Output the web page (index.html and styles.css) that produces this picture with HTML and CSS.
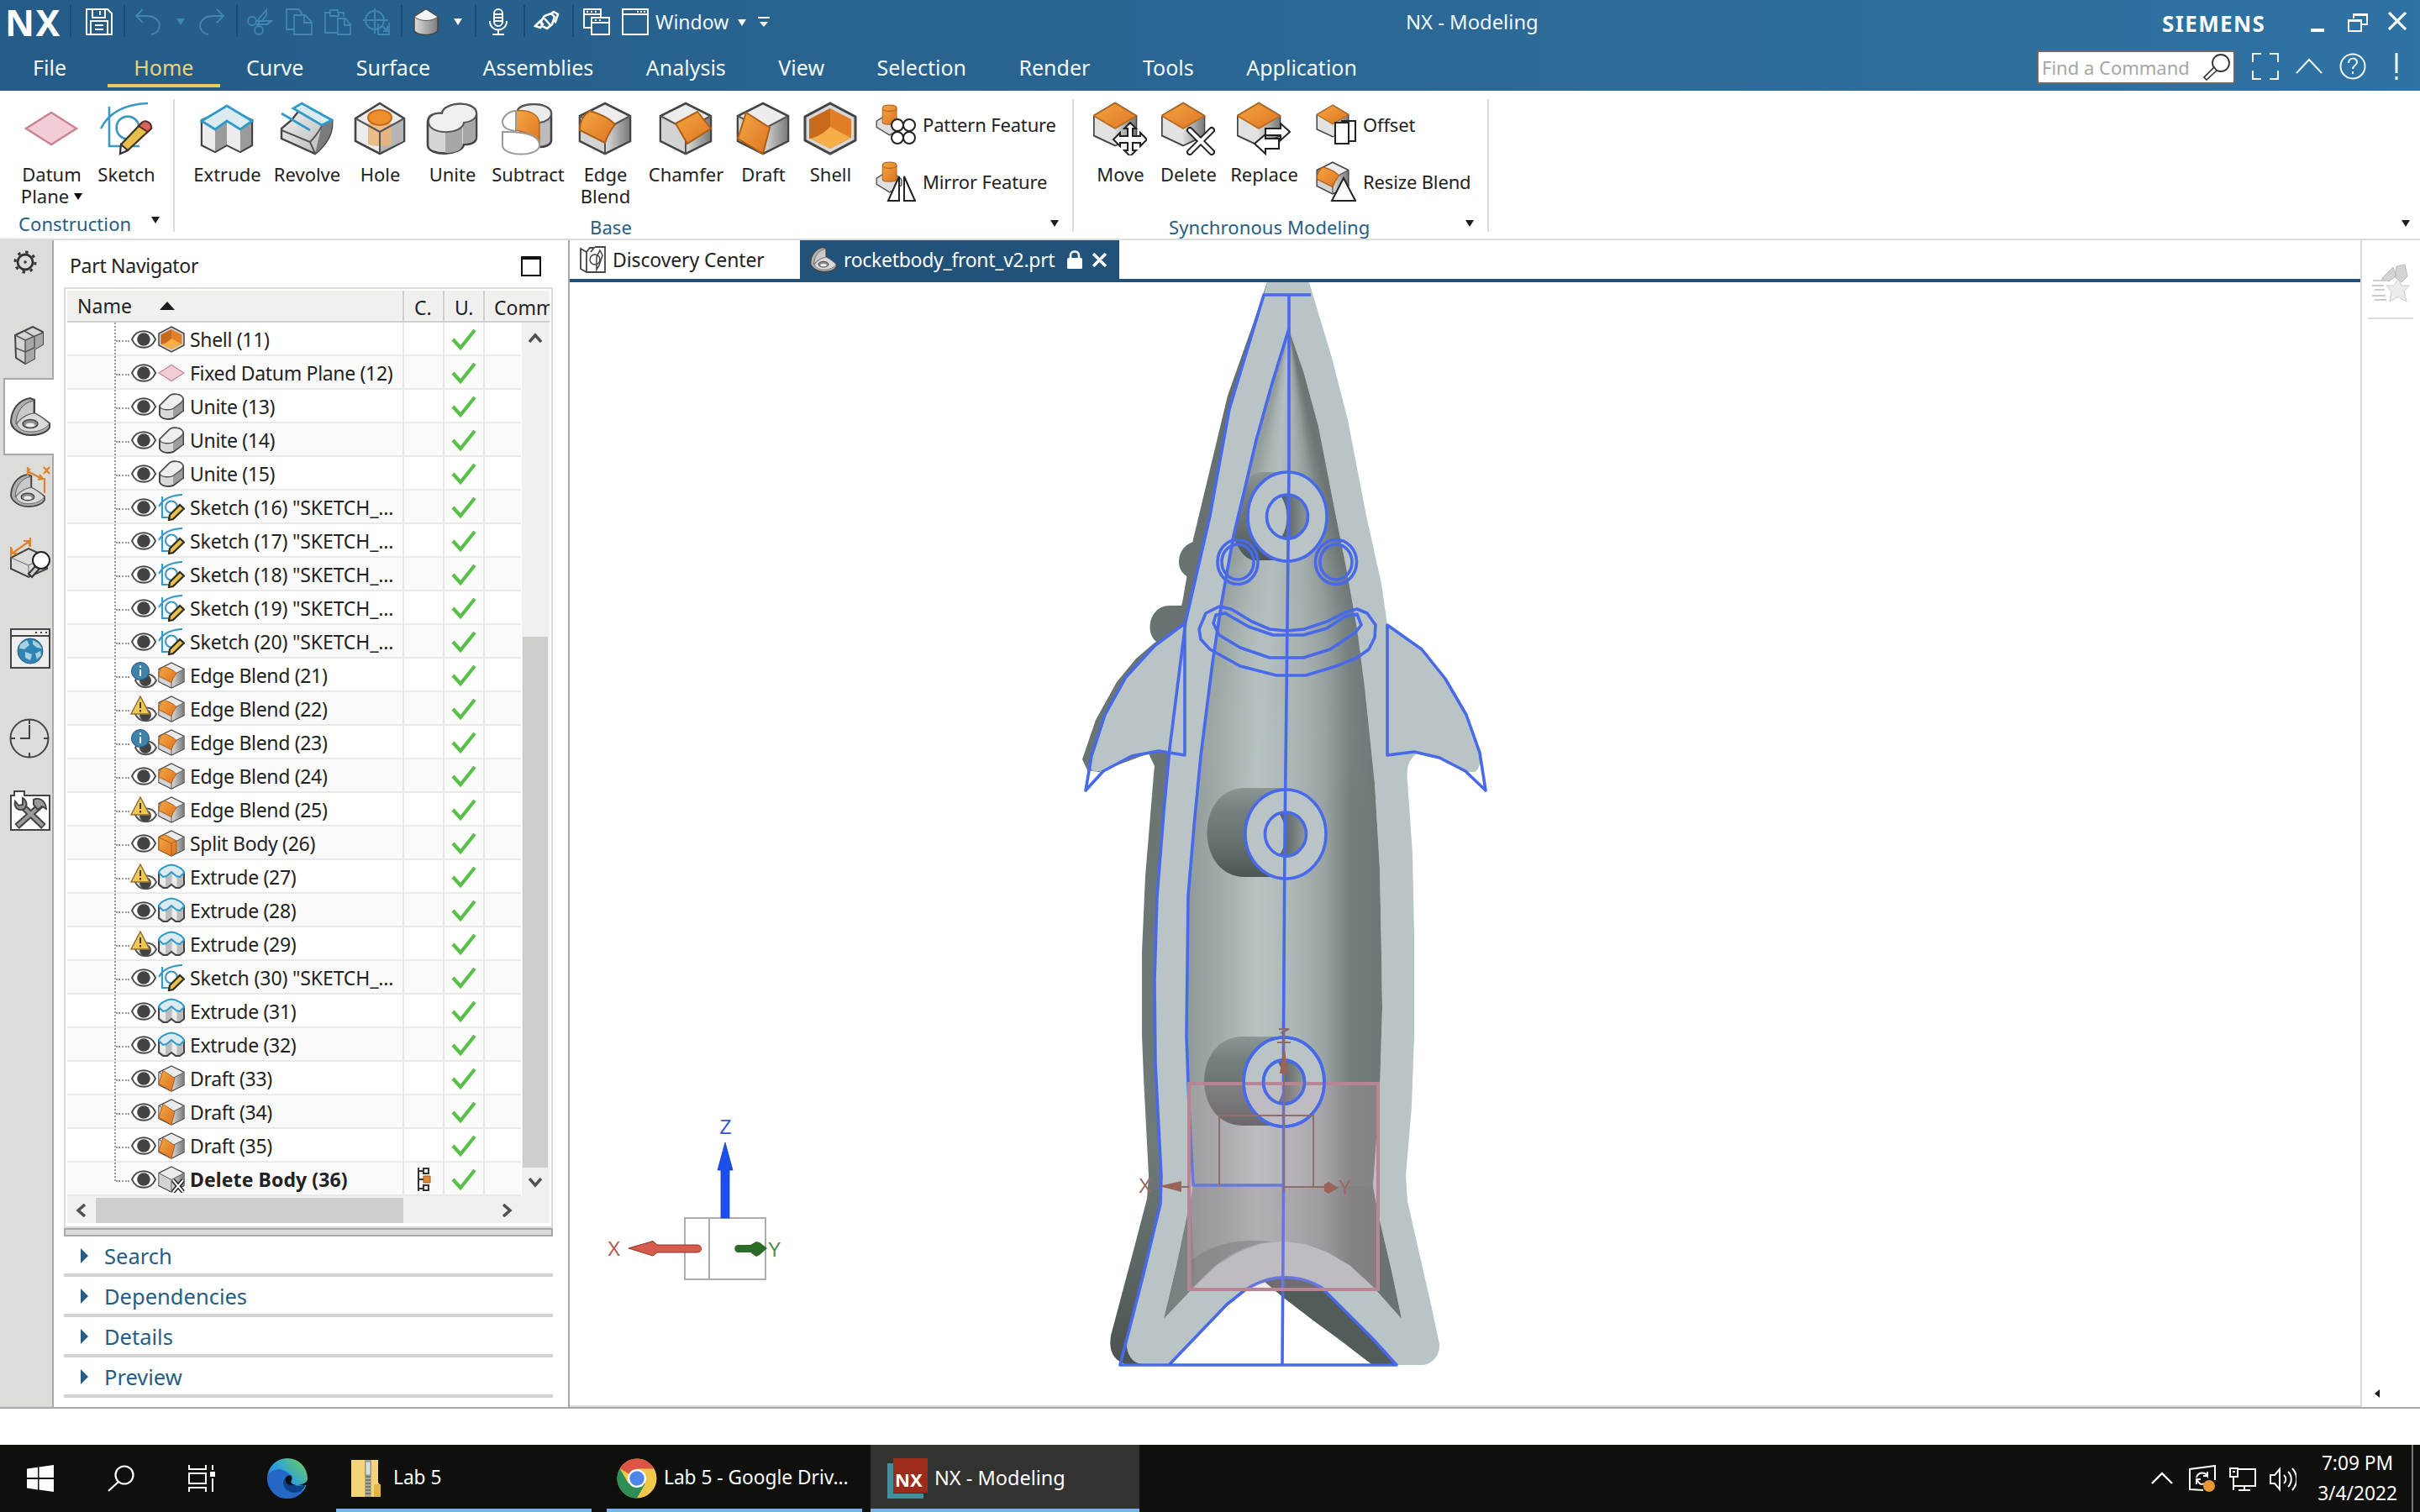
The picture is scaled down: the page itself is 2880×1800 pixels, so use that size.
FILE: index.html
```html
<!DOCTYPE html>
<html lang="en">
<head>
<meta charset="utf-8">
<title>NX - Modeling</title>
<link rel="stylesheet" href="styles.css">
</head>
<body>
<svg class="defs" aria-hidden="true">
<defs>
<linearGradient id="gGrey" x1="0" x2="1" y1="0" y2="1"><stop offset="0" stop-color="#f4f4f4"/><stop offset="1" stop-color="#b4b4b4"/></linearGradient>
<linearGradient id="gDark" x1="0" x2="1" y1="0" y2="0"><stop offset="0" stop-color="#dcdcdc"/><stop offset="1" stop-color="#7c7c7c"/></linearGradient>
<linearGradient id="gOr" x1="0" x2="1" y1="0" y2="1"><stop offset="0" stop-color="#f4a742"/><stop offset="1" stop-color="#dd7424"/></linearGradient>
<linearGradient id="gEdge" x1="0" x2="1" y1="1" y2="0"><stop offset="0" stop-color="#1c56b5"/><stop offset=".5" stop-color="#2c9fdc"/><stop offset="1" stop-color="#74d34e"/></linearGradient>
<symbol id="datum" viewBox="0 0 32 32"><path d="M16 6.500 31 16 16 25.500 1 16z" fill="#f3cdd6" stroke="#c98593" stroke-width="1.200"/></symbol>
<symbol id="sketch" viewBox="0 0 32 32"><g fill="none" stroke="#3a9ac4" stroke-width="1.300"><path d="M6 3v23.500h18M1 16C6 6 16 1.500 29 1"/><circle cx="17" cy="15.500" r="6.700"/></g><path d="M12.500 31 13 25.500 25.500 12.500 31 16 17 29z" fill="#e9bf4b" stroke="#3a3424" stroke-width="1.100"/><path d="M25.500 12.500c2-2 6 0 5.500 3.500l-2 2-5.500-3.500z" fill="#d8655c" stroke="#5a2a26"/><path d="M12.500 31 13 25.500l4 3.500z" fill="#fff" stroke="#333"/></symbol>
<symbol id="sketchS" viewBox="0 0 32 32"><g fill="none" stroke="#3a9ac4" stroke-width="2.200"><path d="M5 3v25h10M1 15C6 6 16 1.500 29 1"/><circle cx="16" cy="15.500" r="7"/></g><path d="M13 31 14 25 26 13l5 4.500L18 30z" fill="#e9bf4b" stroke="#2e2a22" stroke-width="2.200"/></symbol>
<symbol id="extrude" viewBox="0 0 32 32"><path d="M1 11v15l8 4 7-4 8 4 7-4V11L16 4z" fill="#c9c9c9" stroke="#444" stroke-width="1.200"/><path d="M1.500 12v13.500l7.500 4V16zM16 11v14.500l8 4V16z" fill="#ececec"/><path d="M9 16v13.500l7-4V11zM24 16v13.500l6.500-4V12z" fill="#9b9b9b"/><path d="M16 2.500 31 11.500 24 16.500 16 11.500 9 16.500 1 11.500z" fill="#dceaf1" stroke="#2f9bc8" stroke-width="1.400"/></symbol>
<symbol id="extrudeS" viewBox="0 0 32 32"><path d="M1 11v14l5 4h5l5-4 5 4h5l5-4V11L16 4z" fill="#bdbdbd" stroke="#444" stroke-width="2"/><path d="M2.500 13v11l6.500 4V15zM16.500 13v11l6 4V15z" fill="#ececec"/><path d="M16 1.500C22 2 31 7 31 11l-5 5-4-1-6-5-6 5-4 1-5-5c0-4 9-9 15-9.500z" fill="#dceaf1" stroke="#2f9bc8" stroke-width="2"/></symbol>
<symbol id="revolve" viewBox="0 0 32 32"><path d="M14 2 31 11c1 8-4 15-10 20L1 22v-6l6-5z" fill="url(#gGrey)" stroke="#444" stroke-width="1.200"/><path d="M25 14c5-2 6-3 6-3 1 8-4 15-10 20z" fill="#7b7b7b"/><path d="M1 17l17 7 3 7M18 24c4-4 7-9 7-10" fill="none" stroke="#555"/><path d="M13 1 31 11l-6 3L8 4zM8 4l17 10M1 7l17 10" fill="#dceaf1" stroke="#2f9bc8" stroke-width="1.400"/></symbol>
<symbol id="cube" viewBox="0 0 32 32"><path d="M16 1 31 8.500V23.500L16 31 1 23.500V8.500z" fill="#ececec" stroke="#444" stroke-width="1.300"/><path d="M16 16.500 30.500 9v14L16 30.300z" fill="url(#gDark)"/><path d="M1.500 9 16 16.500V30.300L1.500 23z" fill="#d3d3d3"/><path d="M1 8.500 16 16.500 31 8.500M16 16.500V31" fill="none" stroke="#555"/></symbol>
<symbol id="hole" viewBox="0 0 32 32"><path d="M16 1 30.500 10V23.500L16 31 1.500 23.500V10z" fill="#ececec" stroke="#444" stroke-width="1.300"/><path d="M16 18 30 10.500v13L16 30.300z" fill="#b5b5b5"/><path d="M9 13h14v12c0 2-14 2-14 0z" fill="#eab478" opacity=".85"/><ellipse cx="16" cy="9.500" rx="7" ry="4.500" fill="#ee8e2c" stroke="#c66a17"/><path d="M1.500 10 16 18l14.500-8M16 18v12" fill="none" stroke="#555"/></symbol>
<symbol id="unite" viewBox="0 0 32 32"><path d="M1.500 12C1.500 8 6 6.500 10 7c1-7 20-8 20.500 0v14c0 4-5 4.500-7.500 4.500C22 32 2 33 1.500 26z" fill="#d6d6d6" stroke="#444" stroke-width="1.300"/><path d="M12 17V30.500c6 0 10-1 10.500-6V13c5 0 7.500-2 7.500-5v13c0 3-4 4-8 4V13z" fill="#a7a7a7"/><path d="M2 12C2 8 6 6.500 10 7c1-7 20-8 20.500 0 0 4-4 5-7.500 5.500C22 20 2 20 2 12z" fill="#f0f0f0" stroke="#555"/></symbol>
<symbol id="uniteS" viewBox="0 0 32 32"><path d="M2 15 14 3c4-3 15-2 16 4v14L18 30c-6 2-14 1-16-4z" fill="#d9d9d9" stroke="#444" stroke-width="2"/><path d="M18 18c7-3 8-5 11.500-10v13L18 29z" fill="#9d9d9d"/><path d="M2 15 14 3c4-3 15-2 16 4 0 4-5 6-10 10-4 4-17 4-18-2z" fill="#efefef" stroke="#555" stroke-width="1.500"/></symbol>
<symbol id="subtract" viewBox="0 0 32 32"><path d="M10 6C10 0 30 0 30 7V23c0 3-4 4-7 4L14 17z" fill="#bcbcbc" stroke="#444" stroke-width="1.300"/><path d="M10 6C10 0 30 0 30 7c0 3-3 5-7 5.500" fill="#ececec" stroke="#555"/><path d="M9 5.500c8-1 14 2 14 8v13C23 22 19 20 13 18L9 17z" fill="url(#gOr)" stroke="#ad5f15" stroke-width=".6"/><path d="M9 5.500v12C4 17 1 15 1 12s4-6.500 8-6.500z" fill="#fff" stroke="#999"/><path d="M1 18c3 0 22-1 22 8 0 7-22 7-22 0z" fill="#fff" stroke="#999"/></symbol>
<symbol id="eblend" viewBox="0 0 32 32"><use href="#cube"/><path d="M7 5.500c7 2 12 5 15 8-3 4-5 8-6 11L1 17C1 12 3 8 7 5.500z" fill="url(#gOr)" stroke="#ad5f15"/></symbol>
<symbol id="chamfer" viewBox="0 0 32 32"><use href="#cube"/><path d="M23 6 31 16 17 25 10 13z" fill="url(#gOr)" stroke="#ad5f15"/></symbol>
<symbol id="draft" viewBox="0 0 32 32"><use href="#cube"/><path d="M6 6.500 20 15.500 16 31 1 22z" fill="url(#gOr)" stroke="#ad5f15"/></symbol>
<symbol id="split" viewBox="0 0 32 32"><use href="#cube"/><path d="M1 9 8 5.500 22 13v14L16 31 1 23.500z" fill="url(#gOr)" stroke="#ad5f15"/><path d="M1 9l15 7 6-3M16 16v14" fill="none" stroke="#ad5f15"/></symbol>
<symbol id="shell" viewBox="0 0 32 32"><path d="M16 1 31 9V23L16 31 1 23V9z" fill="#d8d8d8" stroke="#444" stroke-width="1.500"/><path d="M16 4 28.500 10.500V21.500L16 28 3.500 21.500V10.500z" fill="#e07f28"/><path d="M3.500 10.500 16 4v11c-2 4-8 7-12.500 7z" fill="#c86a1c"/><path d="M4 22c5-1 9-4 12-7l12 6.500L16 28z" fill="#f6ae48"/></symbol>
<symbol id="topcube" viewBox="0 0 32 32"><path d="M16 1 31 10V24L16 31 1 24V10z" fill="#e2e2e2" stroke="#444" stroke-width="1.200"/><path d="M16 19 30.500 10.500v13L16 30.500z" fill="url(#gDark)"/><path d="M16 1 31 10 16 19 1 10z" fill="url(#gOr)" stroke="#b86a1b"/></symbol>
<symbol id="boss" viewBox="0 0 32 32"><path d="M1 17 14 9l12 9v6L14 31 1 23z" fill="#dedede" stroke="#555" stroke-width="1.200"/><path d="M7 4c0-4 14-4 14 0v14c0 3-14 3-14 0z" fill="url(#gOr)" stroke="#b86a1b"/><path d="M7 4c0 4 14 4 14 0" fill="none" stroke="#b86a1b"/></symbol>
<symbol id="delbody" viewBox="0 0 32 32"><use href="#cube"/><path d="M18 17 30 31M30 17 18 31" stroke="#222" stroke-width="5"/><path d="M18 17 30 31M30 17 18 31" stroke="#fff" stroke-width="2"/></symbol>
<symbol id="eye" viewBox="0 0 32 32"><path d="M2 16C7 3 25 3 30 16 25 29 7 29 2 16z" fill="#fff" stroke="#484848" stroke-width="2"/><circle cx="16" cy="16" r="7.800" fill="#434343"/></symbol>
<symbol id="info" viewBox="0 0 32 32"><path d="M6 22C11 12 27 12 31 22 26 33 11 33 6 22z" fill="#fff" stroke="#555" stroke-width="2"/><circle cx="18" cy="22" r="7" fill="#434343"/><circle cx="12" cy="11" r="10.500" fill="#3f83aa" stroke="#1d5578"/><path d="M12 9v8M12 4.500v2.500" stroke="#fff" stroke-width="2"/></symbol>
<symbol id="warn" viewBox="0 0 32 32"><path d="M6 22C11 12 27 12 31 22 26 33 11 33 6 22z" fill="#fff" stroke="#555" stroke-width="2"/><circle cx="18" cy="23" r="7" fill="#434343"/><path d="M12 1 23 22H1z" fill="#edc758" stroke="#8f752f" stroke-width="1.500"/><path d="M12 8v7M12 17v2.500" stroke="#443718" stroke-width="2"/></symbol>
<symbol id="check" viewBox="0 0 32 28"><path d="M3 14 12 24 29 3" fill="none" stroke="#58c048" stroke-width="4.200"/></symbol>
<symbol id="part" viewBox="0 0 48 46"><path d="M1 30C1 15 10 3 24 1l5 2v16c8 4 13 8 18 12v5C45 40 38 45 24 45 12 45 2 37 1 30z" fill="#adadad" stroke="#444" stroke-width="2"/><path d="M7 32C7 18 15 6 28 4v15c-9 1-17 7-21 13z" fill="#c9c9c9" stroke="#555"/><path d="M8 32c5-7 12-12 21-13 8 4 13 8 17.500 12.500C43 37 35 41 25 41S11 38 8 32z" fill="#dadada" stroke="#666"/><ellipse cx="24" cy="31.500" rx="9" ry="5" fill="#8b8b8b" stroke="#444" stroke-width="1.500"/><ellipse cx="24" cy="33" rx="5.500" ry="2.500" fill="#eee"/></symbol>
<symbol id="caret" viewBox="0 0 10 8"><path d="M0 0h10L5 8z"/></symbol>
</defs>
</svg>

<header class="top">
  <div class="quick">
    <span class="logo">NX</span><i class="vs"></i>
    <span class="q w62 sv"><svg viewBox="0 0 32 32" class="ln"><path d="M1 1h25l5 5v25H1zM8 1v10h15V1M17 3v5M6 31V15h20v16M11 20h10M11 25h10"/></svg></span><i class="vs"></i>
    <span class="q w54"><svg viewBox="0 0 32 32" class="dim"><path d="M10 1 2 9l8 8M2 9h12c20 0 20 20 6 22"/></svg></span>
    <span class="q w24"><svg class="car dimf" viewBox="0 0 10 8"><use href="#caret"/></svg></span>
    <span class="q w50"><svg viewBox="0 0 32 32" class="dim"><path d="m22 1 8 8-8 8M30 9H18C-2 9-2 29 12 31"/></svg></span><i class="vs ml4"></i>
    <span class="q w46 ml4"><svg viewBox="0 0 32 32" class="dim"><circle cx="6" cy="15" r="5"/><circle cx="14" cy="26" r="5"/><path d="M11 15h18l-5 4H11M14 21 14 12l9-10v6l-6 8"/></svg></span>
    <span class="q w46"><svg viewBox="0 0 32 32" class="dim"><path d="M10 25H1V1h14l4 4v3M10 31V8h13l8 8v15zM22 8v9h9"/></svg></span>
    <span class="q w46"><svg viewBox="0 0 32 32" class="dim"><path d="M15 29H1V5h6V2h9v3h7v5M7 5v4h10V5M16 31V12h9l6 7v12zM24 12v8h7"/></svg></span>
    <span class="q w46"><svg viewBox="0 0 32 32" class="dim"><circle cx="14" cy="14" r="11"/><path d="M14 0v30M0 14h30M18 31V18M18 31h13V17M22 20l7 7M29 21v6h-5"/></svg></span><i class="vs ml6"></i>
    <span class="q w56"><svg viewBox="0 0 32 32"><path d="M2 10 16 1l14 9v17c-7 6-21 6-28 0z" fill="url(#gDark)" stroke="#444" stroke-width="1.500"/><path d="M2 10 16 1l14 9c-7 6-21 6-28 0z" fill="#f5f5f5" stroke="#555"/></svg></span>
    <span class="q w20"><svg class="car wf" viewBox="0 0 10 8"><use href="#caret"/></svg></span><i class="vs ml10"></i>
    <span class="q w52"><svg viewBox="0 0 32 32" class="ln"><rect x="11" y="1" width="10" height="20" rx="5"/><path d="M6 15c0 14 20 14 20 0M16 26v5M9 31h14M12 7h8M12 11h8M12 15h8"/></svg></span><i class="vs ml4"></i>
    <span class="q w52"><svg viewBox="0 0 32 32" class="ln"><path d="M2 21l6-6 3 4-3 4zM9 15l4-6 8-3 4 4-3 9-6 5-6-3zM21 6l3-2 5 3-3 9-3-2M13 12l7 8" stroke-width="2.600"/></svg></span><i class="vs ml4"></i>
    <span class="q w46 ml4"><svg viewBox="0 0 32 32" class="ln"><path d="M10 23H1V1h20v9M1 7h20M10 31V11h21v20zM10 17h21M4 4h2M9 4h2M14 4h2M14 14h2M19 14h2"/></svg></span>
    <span class="q w46"><svg viewBox="0 0 32 32" class="ln"><path d="M1 1h30v30H1zM1 7h30M18 4h2M22 4h2M26 4h2"/></svg></span>
    <span class="wtxt">Window</span>
    <svg class="car wf" viewBox="0 0 10 8"><use href="#caret"/></svg>
    <svg class="over" viewBox="0 0 14 14"><path d="M0 0h14v2H0zM2 6h10l-5 6z" fill="#fff"/></svg>
    <span class="title">NX - Modeling</span>
    <span class="siemens">SIEMENS</span>
    <svg class="min" viewBox="0 0 16 4"><path d="M0 0h16v4H0z" fill="#fff"/></svg>
    <svg class="rest" viewBox="0 0 24 24"><path d="M7 7V2h16v12h-6M1 9h15v13H1zM7 3h16M1 10h15" fill="none" stroke="#fff" stroke-width="2"/></svg>
    <svg class="cls" viewBox="0 0 22 22"><path d="M1 1l20 20M21 1 1 21" stroke="#fff" stroke-width="3.200"/></svg>
  </div>
  <nav class="menu">
    <a class="file">File</a><a class="on">Home</a><a>Curve</a><a>Surface</a><a>Assemblies</a><a>Analysis</a><a>View</a><a>Selection</a><a>Render</a><a>Tools</a><a>Application</a>
    <span class="find"><span>Find a Command</span><svg viewBox="0 0 32 32"><circle cx="21" cy="11" r="10" fill="#fff" stroke="#333" stroke-width="1.800"/><path d="M13 16 1 28l3 3 12-11z" fill="#fff" stroke="#333" stroke-width="1.600"/></svg></span>
    <svg class="mi" viewBox="0 0 32 32"><path d="M1 11V1h10M21 1h10v10M31 21v10H21M11 31H1V21"/></svg>
    <svg class="mi" viewBox="0 0 32 32"><path d="M1 24 16 8l15 16"/></svg>
    <svg class="mi" viewBox="0 0 32 32"><circle cx="16" cy="16" r="14.500"/><path d="M11 12c0-7 10-7 10-1 0 4-5 4-5 8M16 22v3"/></svg>
    <svg class="mi ex" viewBox="0 0 32 32"><path d="M16 0v24M16 28v4" stroke-width="3"/></svg>
  </nav>
</header>

<section class="ribbon">
  <div class="grp g1">
    <div class="tools">
      <div class="tool w88"><svg><use href="#datum"/></svg><span>Datum<br>Plane<svg class="mc" viewBox="0 0 10 8"><use href="#caret"/></svg></span></div>
      <div class="tool w90"><svg><use href="#sketch"/></svg><span>Sketch</span></div>
    </div>
    <div class="foot"><span>Construction</span><svg viewBox="0 0 10 8"><use href="#caret"/></svg></div>
  </div>
  <div class="grp g2">
    <div class="tools">
      <div class="tool w96"><svg><use href="#extrude"/></svg><span>Extrude</span></div>
      <div class="tool w94"><svg><use href="#revolve"/></svg><span>Revolve</span></div>
      <div class="tool w80"><svg><use href="#hole"/></svg><span>Hole</span></div>
      <div class="tool w92"><svg><use href="#unite"/></svg><span>Unite</span></div>
      <div class="tool w88"><svg><use href="#subtract"/></svg><span>Subtract</span></div>
      <div class="tool w96"><svg><use href="#eblend"/></svg><span>Edge<br>Blend</span></div>
      <div class="tool w96"><svg><use href="#chamfer"/></svg><span>Chamfer</span></div>
      <div class="tool w88"><svg><use href="#draft"/></svg><span>Draft</span></div>
      <div class="tool w72"><svg><use href="#shell"/></svg><span>Shell</span></div>
      <div class="smalls">
        <div><svg viewBox="0 0 48 48"><use href="#boss" width="38" height="38"/><g fill="#fff" stroke="#222" stroke-width="2"><circle cx="26" cy="25" r="7"/><circle cx="40" cy="25" r="7"/><circle cx="26" cy="40" r="7"/><circle cx="40" cy="40" r="7"/></g></svg>Pattern Feature</div>
        <div><svg viewBox="0 0 48 48"><use href="#boss" width="38" height="38"/><path d="M28 18v29H15zM34 18v29h13z" fill="#fff" stroke="#222" stroke-width="2"/></svg>Mirror Feature</div>
      </div>
    </div>
    <div class="foot"><span>Base</span><svg viewBox="0 0 10 8"><use href="#caret"/></svg></div>
  </div>
  <div class="grp g3">
    <div class="tools">
      <div class="tool w86"><svg viewBox="0 0 64 64"><use href="#topcube" width="54" height="54" x="-1"/><path d="M44 25l7 7h-4v9h9v-4l8 8-8 8v-4h-9v9h4l-7 7-7-7h4v-9h-9v4l-8-8 8-8v4h9v-9h-4z" fill="#fff" stroke="#222" stroke-width="2"/></svg><span>Move</span></div>
      <div class="tool w76"><svg viewBox="0 0 64 64"><use href="#topcube" width="54" height="54" x="-1"/><path d="M34 34 60 60M60 34 34 60" stroke="#222" stroke-width="8" stroke-linecap="round"/><path d="M34 34 60 60M60 34 34 60" stroke="#fff" stroke-width="4" stroke-linecap="round"/></svg><span>Delete</span></div>
      <div class="tool w104"><svg viewBox="0 0 64 64"><use href="#topcube" width="54" height="54" x="-1"/><path d="M34 32h18v-6l11 10-11 10v-6H34zM50 44H34v-5L21 50l13 12v-6h16z" fill="#fff" stroke="#222" stroke-width="2"/></svg><span>Replace</span></div>
      <div class="smalls s2">
        <div><svg viewBox="0 0 48 48"><use href="#topcube" width="40" height="40"/><path d="M30 20h17v24h-8M23 22h16v25H23z" fill="#fff" stroke="#222" stroke-width="2"/></svg>Offset</div>
        <div><svg viewBox="0 0 48 48"><use href="#eblend" width="40" height="40"/><path d="M33 20 47 47H19z" fill="#fff" stroke="#222" stroke-width="2"/></svg>Resize Blend</div>
      </div>
    </div>
    <div class="foot"><span>Synchronous Modeling</span><svg viewBox="0 0 10 8"><use href="#caret"/></svg></div>
  </div>
  <svg class="rbc" viewBox="0 0 10 8"><use href="#caret"/></svg>
</section>

<main class="main">
  <aside class="rail">
    <svg class="r1" viewBox="0 0 28 28"><circle cx="14" cy="14" r="9" fill="none" stroke="#333" stroke-width="2.800"/><circle cx="14" cy="14" r="12" fill="none" stroke="#333" stroke-width="3" stroke-dasharray="3.400 6"/><circle cx="14" cy="14" r="1.700" fill="#333"/></svg>
    <svg class="r2" viewBox="0 0 36 46"><path d="M1 11 22 1l12 6v15l-10 6v11l-11 6L2 38z" fill="#d5d5d5" stroke="#444" stroke-width="2"/><path d="M13 17 34 8v14l-10 6v11l-11 6z" fill="#a8a8a8"/><path d="M1 11l12 6 21-9M13 17v28M1 26l12 5 11-5V13L12 6M13 31v14" fill="none" stroke="#555" stroke-width="1.500"/></svg>
    <div class="cur"><svg viewBox="0 0 48 46"><use href="#part"/></svg></div>
    <svg class="r4" viewBox="0 0 48 50"><use href="#part" width="42" height="40" y="9"/><path d="M21 1v10M21 6l17 9M41 14v18M40 1l7 8M47 1l-7 8M24 3l-3 3 5 3M35 10l4 5-6 1" fill="none" stroke="#dd832d" stroke-width="2.200"/></svg>
    <svg class="r5" viewBox="0 0 48 50"><path d="M1 25 22 14l22 10v14L22 48 1 38z" fill="#dcdcdc" stroke="#444" stroke-width="2"/><path d="M1 25 22 34 42 24M22 34v13" fill="none" stroke="#666"/><path d="M1 24V12M24 12V1M2 20 22 6M2 14v6h7M16 5h7v6" fill="none" stroke="#dd832d" stroke-width="2.200"/><path d="M31 34 22 44l4 4 9-10z" fill="#ccc" stroke="#333" stroke-width="2"/><circle cx="37" cy="28" r="10" fill="#fff" stroke="#222" stroke-width="2"/></svg>
    <svg class="r6" viewBox="0 0 48 48"><path d="M1 1h46v46H1z" fill="#eee" stroke="#444" stroke-width="2"/><path d="M1 9h46M30 5h2M36 5h2M42 5h2" stroke="#444" stroke-width="2"/><circle cx="24" cy="27" r="15" fill="#2e84b2" stroke="#245f80"/><path d="M12 19l8-5 3 6-6 5-6-1zM27 14l7 4 4 6-6-1-5-4zM18 28l8 3-2 7-6-3zM30 30l6-3 1 5-5 5z" fill="#a9d1e4"/></svg>
    <svg class="r7" viewBox="0 0 48 48"><circle cx="24" cy="24" r="22.500" fill="none" stroke="#444" stroke-width="2"/><path d="M24 2v5M24 41v5M2 24h5M41 24h5M24 8v16H13" fill="none" stroke="#444" stroke-width="2"/></svg>
    <svg class="r8" viewBox="0 0 48 48"><path d="M1 6h4V1h12v5h30v41H1z" fill="#fff" stroke="#444" stroke-width="2"/><path d="M8 43 37 17M40 43 14 18" stroke="#444" stroke-width="8"/><path d="M9 42 37 17M39 42 14 18" stroke="#999" stroke-width="4"/><path d="M6 13c-2 8 5 12 11 9 4-4 3-10-2-13v8l-5 1zM28 11c6-3 14 0 15 11l-5-3-5 4-5-6z" fill="#999" stroke="#444" stroke-width="2"/></svg>
  </aside>

  <section class="panel">
    <div class="ph"><span>Part Navigator</span><i></i></div>
    <div class="tree">
      <div class="th"><span class="n">Name<svg viewBox="0 0 18 10"><path d="M0 10 9 0l9 10z" fill="#1c1c1c"/></svg></span><span class="c">C.</span><span class="c">U.</span><span class="m">Comm</span></div>
      <div class="tb">
        <div class="rows">
<div class="row"><i class="tw"></i><svg class="e"><use href="#eye"/></svg><svg class="f"><use href="#shell"/></svg><b>Shell (11)</b><u></u><u><svg><use href="#check"/></svg></u></div>
<div class="row"><i class="tw"></i><svg class="e"><use href="#eye"/></svg><svg class="f"><use href="#datum"/></svg><b>Fixed Datum Plane (12)</b><u></u><u><svg><use href="#check"/></svg></u></div>
<div class="row"><i class="tw"></i><svg class="e"><use href="#eye"/></svg><svg class="f"><use href="#uniteS"/></svg><b>Unite (13)</b><u></u><u><svg><use href="#check"/></svg></u></div>
<div class="row"><i class="tw"></i><svg class="e"><use href="#eye"/></svg><svg class="f"><use href="#uniteS"/></svg><b>Unite (14)</b><u></u><u><svg><use href="#check"/></svg></u></div>
<div class="row"><i class="tw"></i><svg class="e"><use href="#eye"/></svg><svg class="f"><use href="#uniteS"/></svg><b>Unite (15)</b><u></u><u><svg><use href="#check"/></svg></u></div>
<div class="row sk"><i class="tw"></i><svg class="e"><use href="#eye"/></svg><svg class="f"><use href="#sketchS"/></svg><b>Sketch (16) "SKETCH_...</b><u></u><u><svg><use href="#check"/></svg></u></div>
<div class="row sk"><i class="tw"></i><svg class="e"><use href="#eye"/></svg><svg class="f"><use href="#sketchS"/></svg><b>Sketch (17) "SKETCH_...</b><u></u><u><svg><use href="#check"/></svg></u></div>
<div class="row sk"><i class="tw"></i><svg class="e"><use href="#eye"/></svg><svg class="f"><use href="#sketchS"/></svg><b>Sketch (18) "SKETCH_...</b><u></u><u><svg><use href="#check"/></svg></u></div>
<div class="row sk"><i class="tw"></i><svg class="e"><use href="#eye"/></svg><svg class="f"><use href="#sketchS"/></svg><b>Sketch (19) "SKETCH_...</b><u></u><u><svg><use href="#check"/></svg></u></div>
<div class="row sk"><i class="tw"></i><svg class="e"><use href="#eye"/></svg><svg class="f"><use href="#sketchS"/></svg><b>Sketch (20) "SKETCH_...</b><u></u><u><svg><use href="#check"/></svg></u></div>
<div class="row"><i class="tw"></i><svg class="e"><use href="#info"/></svg><svg class="f"><use href="#eblend"/></svg><b>Edge Blend (21)</b><u></u><u><svg><use href="#check"/></svg></u></div>
<div class="row"><i class="tw"></i><svg class="e"><use href="#warn"/></svg><svg class="f"><use href="#eblend"/></svg><b>Edge Blend (22)</b><u></u><u><svg><use href="#check"/></svg></u></div>
<div class="row"><i class="tw"></i><svg class="e"><use href="#info"/></svg><svg class="f"><use href="#eblend"/></svg><b>Edge Blend (23)</b><u></u><u><svg><use href="#check"/></svg></u></div>
<div class="row"><i class="tw"></i><svg class="e"><use href="#eye"/></svg><svg class="f"><use href="#eblend"/></svg><b>Edge Blend (24)</b><u></u><u><svg><use href="#check"/></svg></u></div>
<div class="row"><i class="tw"></i><svg class="e"><use href="#warn"/></svg><svg class="f"><use href="#eblend"/></svg><b>Edge Blend (25)</b><u></u><u><svg><use href="#check"/></svg></u></div>
<div class="row"><i class="tw"></i><svg class="e"><use href="#eye"/></svg><svg class="f"><use href="#split"/></svg><b>Split Body (26)</b><u></u><u><svg><use href="#check"/></svg></u></div>
<div class="row"><i class="tw"></i><svg class="e"><use href="#warn"/></svg><svg class="f"><use href="#extrudeS"/></svg><b>Extrude (27)</b><u></u><u><svg><use href="#check"/></svg></u></div>
<div class="row"><i class="tw"></i><svg class="e"><use href="#eye"/></svg><svg class="f"><use href="#extrudeS"/></svg><b>Extrude (28)</b><u></u><u><svg><use href="#check"/></svg></u></div>
<div class="row"><i class="tw"></i><svg class="e"><use href="#warn"/></svg><svg class="f"><use href="#extrudeS"/></svg><b>Extrude (29)</b><u></u><u><svg><use href="#check"/></svg></u></div>
<div class="row sk"><i class="tw"></i><svg class="e"><use href="#eye"/></svg><svg class="f"><use href="#sketchS"/></svg><b>Sketch (30) "SKETCH_...</b><u></u><u><svg><use href="#check"/></svg></u></div>
<div class="row"><i class="tw"></i><svg class="e"><use href="#eye"/></svg><svg class="f"><use href="#extrudeS"/></svg><b>Extrude (31)</b><u></u><u><svg><use href="#check"/></svg></u></div>
<div class="row"><i class="tw"></i><svg class="e"><use href="#eye"/></svg><svg class="f"><use href="#extrudeS"/></svg><b>Extrude (32)</b><u></u><u><svg><use href="#check"/></svg></u></div>
<div class="row"><i class="tw"></i><svg class="e"><use href="#eye"/></svg><svg class="f"><use href="#draft"/></svg><b>Draft (33)</b><u></u><u><svg><use href="#check"/></svg></u></div>
<div class="row"><i class="tw"></i><svg class="e"><use href="#eye"/></svg><svg class="f"><use href="#draft"/></svg><b>Draft (34)</b><u></u><u><svg><use href="#check"/></svg></u></div>
<div class="row"><i class="tw"></i><svg class="e"><use href="#eye"/></svg><svg class="f"><use href="#draft"/></svg><b>Draft (35)</b><u></u><u><svg><use href="#check"/></svg></u></div>
<div class="row last"><i class="tw"></i><svg class="e"><use href="#eye"/></svg><svg class="f"><use href="#delbody"/></svg><b>Delete Body (36)</b><u><svg viewBox="0 0 28 28"><path d="M8 0v28M8 4h6M8 14h6M8 25h6M14 1h6v6h-6zM14 21h6v6h-6z" fill="none" stroke="#333" stroke-width="2"/><path d="M14 10h8v8h-8z" fill="#e08a34" stroke="#9a5c1c"/></svg></u><u><svg><use href="#check"/></svg></u></div>
        </div>
        <div class="vsb"><svg viewBox="0 0 16 12"><path d="M1 11 8 3l7 8" /></svg><i></i><svg viewBox="0 0 16 12"><path d="M1 1l7 8 7-8"/></svg></div>
      </div>
      <div class="hsb"><svg viewBox="0 0 12 16"><path d="M11 1 3 8l8 7"/></svg><i></i><svg viewBox="0 0 12 16"><path d="M1 1l8 7-8 7"/></svg></div>
    </div>
    <div class="split"></div>
    <div class="sec"><svg viewBox="0 0 9 18"><path d="M0 0l9 9-9 9z" fill="#255d86"/></svg>Search</div>
    <div class="sec"><svg viewBox="0 0 9 18"><path d="M0 0l9 9-9 9z" fill="#255d86"/></svg>Dependencies</div>
    <div class="sec"><svg viewBox="0 0 9 18"><path d="M0 0l9 9-9 9z" fill="#255d86"/></svg>Details</div>
    <div class="sec"><svg viewBox="0 0 9 18"><path d="M0 0l9 9-9 9z" fill="#255d86"/></svg>Preview</div>
  </section>

  <section class="work">
    <div class="tabs">
      <div class="tab"><svg viewBox="0 0 32 32" class="ti"><path d="M1 27V3l7 4v24zM8 31V7l4-5h5l-4 5M8 31h22V1H18" fill="none" stroke="#444" stroke-width="1.800"/><path d="M24 5l3 6-4 12-3 5V13z" fill="#fff" stroke="#444" stroke-width="1.500"/><circle cx="18" cy="16" r="6" fill="none" stroke="#444" stroke-width="1.500"/></svg><span>Discovery Center</span></div>
      <div class="tab act"><svg viewBox="0 0 48 46" class="ti"><use href="#part"/></svg><span>rocketbody_front_v2.prt</span><svg class="lock" viewBox="0 0 20 22"><path d="M5 10V6c0-6 10-6 10 0v4" fill="none" stroke="#fff" stroke-width="2.600"/><rect x="1" y="9" width="18" height="13" rx="1.500" fill="#fff"/></svg><svg class="x" viewBox="0 0 16 16"><path d="M1 1l14 14M15 1 1 15" stroke="#fff" stroke-width="3.400"/></svg></div>
    </div>
    <div class="vp">
<svg class="scene" viewBox="678 336 2131 1338">
<defs>
<linearGradient id="cav" gradientUnits="userSpaceOnUse" x1="1412" x2="1645" y1="0" y2="0"><stop offset="0" stop-color="#8f9b99"/><stop offset=".18" stop-color="#a0acab"/><stop offset=".36" stop-color="#b8c4c4"/><stop offset=".56" stop-color="#abb6b7"/><stop offset=".7" stop-color="#99a4a3"/><stop offset=".84" stop-color="#727d7b"/><stop offset="1" stop-color="#6e7877"/></linearGradient>
<linearGradient id="cyl" x1="0" x2="0" y1="0" y2="1"><stop offset="0" stop-color="#8b9695"/><stop offset=".25" stop-color="#75807f"/><stop offset=".6" stop-color="#687271"/><stop offset="1" stop-color="#4c5654"/></linearGradient>
<linearGradient id="side" gradientUnits="userSpaceOnUse" x1="0" x2="0" y1="336" y2="1625"><stop offset="0" stop-color="#646f6d"/><stop offset=".8" stop-color="#707b79"/><stop offset="1" stop-color="#4a5351"/></linearGradient>
<linearGradient id="hol" x1="0" x2="1" y1="0" y2="0"><stop offset="0" stop-color="#525c5a"/><stop offset=".5" stop-color="#6f7a78"/><stop offset="1" stop-color="#8d9896"/></linearGradient>
<clipPath id="cc"><path id="cavp" d="M1534 393 1514 456 1495 524 1480 588 1468 638 1454 716 1443 789 1429 900 1421 983 1414 1067 1413 1133 1412 1233 1415 1317 1420 1410 1415 1437 1400 1507 1385 1570 1420 1533 1447 1507 1473 1491 1500 1481 1527 1478 1553 1481 1580 1491 1607 1507 1635 1533 1668 1570 1657 1517 1642 1453 1634 1413 1642 1300 1645 1200 1644 1133 1642 1033 1636 932 1624 818 1615 749 1601 671 1588 606 1569 508 1551 442z"/></clipPath>
</defs>
<g fill="url(#side)">
<path d="M1428 644c-14 0-25 10-25 25 0 10 6 16 14 20z"/><path d="M1408 721h-16c-26 0-30 36-14 44l30-10z"/>
<path d="M1508 336 1490 389 1461 471 1420 642 1408 712 1401 746 1373 766 1352 784 1329 812 1304 857 1288 904l6 13 14 2 59-22 7 15-1 10-10 121-4 90v100l2 50 6 117-2 27-13 50-30 113c-3 20 4 30 20 35h80L1500 500 1530 336z"/>
</g>
<path fill="#b8c4c5" d="M1508 336 1504 351 1463 487 1440 614 1411 744 1374 769 1340 806 1315 851 1299 900 1297 914 1302 919 1313 917 1347 900 1367 896 1379 894 1391 896 1385 960 1377 1067 1374 1167 1375 1267 1377 1317 1382 1400 1381 1433 1360 1520 1341 1593C1339 1610 1346 1622 1358 1624H1392L1420 1597 1460 1553 1480 1537 1503 1525 1527 1521 1550 1523 1573 1533 1633 1593 1662 1625H1693C1706 1624 1714 1612 1713 1600L1703 1553 1687 1483 1675 1430 1673 1400 1680 1317 1683 1233V1113L1681 1017 1675 930C1673 910 1678 904 1686 897L1713 902 1744 919H1755C1762 915 1762 905 1761 896L1745 851 1720 808 1692 773 1651 744 1644 695 1626 614 1604 500 1585 426 1563 353 1558 336z"/>
<path fill="#525c5a" d="M1505 1526c20-8 42-6 68 7l89 91h-30l-39-30-33-24-30-23z"/>
<path fill="#fff" d="M1505 1528l25 19 30 23 33 27 39 27H1393l67-70 20-16z"/>
<g clip-path="url(#cc)">
<use href="#cavp" fill="url(#cav)"/>
<foreignObject x="1384" y="336" width="300" height="700"><div class="cone"></div></foreignObject>
<path d="M1380 1412h290v170h-290z" fill="#55605e" opacity=".16"/>
<path d="M1385 1570l15-63 15-100 6 90 0 40z" fill="#6c7776" opacity=".55"/>
<path d="M1418 1500c25-18 50-26 95-22-35 5-66 22-93 55z" fill="#5c6564" opacity=".45"/>
<path d="M1532 562h-32c-40 8-46 90-10 105h42z" fill="url(#cyl)"/>
<path d="M1530 938h-50c-58 2-58 104 0 106h50z" fill="url(#cyl)"/>
<path d="M1528 1234h-50c-60 2-60 104 0 106h50z" fill="url(#cyl)"/>
</g>
<g fill="#b8c4c5"><ellipse cx="1532" cy="615" rx="47" ry="53"/><ellipse cx="1530" cy="993" rx="48" ry="53"/><ellipse cx="1528" cy="1288" rx="48" ry="53"/></g>
<g fill="url(#hol)"><path d="M1524 590c42-14 42 66 0 51 10-14 10-36 0-51z"/><path d="M1522 968c42-14 42 66 0 51 10-14 10-36 0-51z"/><path d="M1520 1263c42-14 42 66 0 51 10-14 10-36 0-51z"/></g>
<g fill="none" stroke="#4769ea" stroke-width="3.600" stroke-linejoin="round">
<path d="M1560 351H1504L1463 487 1440 614 1411 740 1392 891 1385 967 1377 1067 1374 1167 1375 1267 1382 1400 1381 1433 1360 1520 1333 1625H1662L1633 1593 1573 1533C1545 1516 1510 1516 1480 1537L1460 1553 1392 1624"/>
<path d="M1534 351V560L1531 830 1529 1000 1527.500 1230V1411L1526 1624"/>
<path d="M1534 391 1514 456 1495 524 1480 588 1468 638 1454 716 1443 789 1429 900 1421 983 1414 1067 1412 1233 1415 1317 1420 1411H1527"/>
<path d="M1410 742V899L1379 894 1347 900 1313 918 1292 941 1299 900 1315 851 1340 806 1374 769z"/>
<path d="M1651 744 1692 773 1720 808 1745 851 1761 896 1768 941 1744 918 1713 902 1683 895 1651 899z"/>
<ellipse cx="1532" cy="615" rx="47" ry="53"/><ellipse cx="1532" cy="615" rx="24.500" ry="26"/>
<ellipse cx="1530" cy="993" rx="48" ry="53"/><ellipse cx="1530" cy="993" rx="24.500" ry="26"/>
<ellipse cx="1528" cy="1288" rx="48" ry="53"/><ellipse cx="1528" cy="1288" rx="24.500" ry="26"/>
<ellipse cx="1473" cy="669" rx="24" ry="26.500"/><ellipse cx="1473" cy="669" rx="19" ry="21"/><ellipse cx="1590" cy="669" rx="24.500" ry="26.500"/><ellipse cx="1590" cy="669" rx="19" ry="21"/>
<path d="M1427 749 1435 730 1451 722 1465 725 1490 740 1511 749 1531 751 1552 749 1579 740 1601 729 1615 725 1627 730 1637 744 1636 759 1629 773 1615 783 1590 793 1554 804H1519L1476 793 1440 773 1429 761z"/>
<path d="M1444 742 1447 732 1458 730 1486 746 1515 756H1551L1579 748 1601 734 1615 731 1620 744 1613 753 1583 773 1551 783H1511L1476 771 1451 756z"/>
</g>
<path d="M1415 1290h225v245h-225z" fill="#d3a3b6" fill-opacity=".24" stroke="#b98594" stroke-width="4"/>
<g fill="none" stroke="#4769ea" stroke-width="3.600"><ellipse cx="1528" cy="1288" rx="48" ry="53"/><ellipse cx="1528" cy="1288" rx="24.500" ry="26"/></g>
<g fill="none" stroke="#8e6c68" stroke-width="2"><path d="M1451 1412v-84h112v84M1527 1413h52M1385 1413h30M1528 1225v195M1520 1241h16M1522 1225h12l-10 5"/></g>
<g fill="#9a6358"><path d="M1380 1412l26-6v13zM1593 1414l-12-7-5 3v8l5 3zM1523 1278l5-35 5 35z"/></g>
<g class="ax" fill="#9a6a62"><text x="1355" y="1420">X</text><text x="1593" y="1422">Y</text></g>
<g fill="none" stroke="#adadad" stroke-width="2"><path d="M815 1450h96v73h-96zM844 1450v73"/></g>
<path d="M858 1450v-57h-4l9-33 9 33h-4v57z" fill="#1c4fee" stroke="#173fae" stroke-width=".8"/>
<path d="M748 1486l29-8.500 5 4.500h48a4 4 0 0 1 0 9h-48l-5 4z" fill="#d65b4c" stroke="#8c342a" stroke-width="1"/>
<path d="M878 1482h15l7-4 4 1 9 7-9 8-4 2-7-5h-15c-5 0-5-9 0-9z" fill="#2c6b28"/>
<g class="ax"><text x="856.500" y="1350" fill="#3a55c8">Z</text><text x="723" y="1495" fill="#b45a50">X</text><text x="914" y="1496" fill="#4d8a48">Y</text></g>
</svg>
    </div>
  </section>
  <aside class="rbar"><svg viewBox="0 0 46 46"><path d="M12 18 26 4l4 10-9 7zM30 3l10-2 3 14-7 7-8-6z" fill="#d4d4d4" stroke="#bbb"/><path d="M32 18l4 8h9l-6 7 3 12-10-6-10 6 2-12-6-7h9z" fill="#ececec" stroke="#ccc"/><path d="M2 20h18M1 26h14M4 31h12M1 38h16M4 43h14" stroke="#ccc" stroke-width="2"/></svg><i></i><svg class="bk" viewBox="0 0 8 10"><path d="M6 0v10L0 5z" fill="#1c1c1c"/></svg></aside>
</main>
<div class="status"></div>

<footer class="task">
  <svg class="t1" viewBox="0 0 32 32"><path d="M0 4.500 13 2.700V15H0zM14.500 2.500 32 0v15H14.500zM0 17h13v12.500L0 27.500zM14.500 17H32v15l-17.500-2.500z" fill="#fff"/></svg>
  <svg class="t2" viewBox="0 0 32 32"><circle cx="20" cy="12" r="10.500" fill="none" stroke="#fff" stroke-width="2.200"/><path d="M13 20 1 31" stroke="#fff" stroke-width="2.200"/></svg>
  <svg class="t3" viewBox="0 0 32 32"><path d="M1 0v5h20V0M1 32v-5h20v5M1 10h20v12H1zM29 0v6M29 16v16" fill="none" stroke="#fff" stroke-width="2"/><path d="M26 8h6v6h-6z" fill="#fff"/></svg>
  <svg class="t4" viewBox="0 0 48 48"><circle cx="24" cy="24" r="24" fill="url(#gEdge)"/><path d="M1 20C6 12 20 10 27 20c-10 0-12 12-2 18 8 4 14 2 18 0-8 12-26 14-36 3C1 34-1 27 1 20z" fill="#2567c4"/><path d="M19 29c0-7 6-10 9-9 3 2 1 6 0 8 2 5 12 6 18 3-2 6-6 10-14 10-8-1-13-6-13-12z" fill="#0f3f86"/><path d="M22 24c3-6 9-3 7 2-2 3 0 5 5 6 6 0 12-2 14-6v6H28c-4 0-7-4-6-8z" fill="#0f0f0d"/></svg>
  <div class="app a1"><svg viewBox="0 0 36 46"><path d="M1 1h32v27l3 3v14H1z" fill="#f3d477"/><path d="M28 30h8v15h-8z" fill="#e2b545"/><path d="M17 1h8v44h-8z" fill="#b0a98f"/><path d="M21 4v40" stroke="#777" stroke-width="6" stroke-dasharray="2 2"/><path d="M18 3h6v16h-6z" fill="#ddd" stroke="#888"/></svg><span>Lab 5</span></div>
  <div class="app a2"><svg viewBox="0 0 48 48"><circle cx="24" cy="24" r="23.500" fill="#f2c84b"/><path d="M24 24 3.600 12.200A23.500 23.500 0 0 1 44.400 12.500L24 12.500z" fill="#dc5443"/><path d="M3.600 12.200A23.500 23.500 0 0 0 24 47.500L34 30 24 24 14 30z" fill="#2e8c55"/><circle cx="24" cy="24" r="11" fill="#fff"/><circle cx="24" cy="24" r="8.700" fill="#4c86e8"/></svg><span>Lab 5 - Google Driv...</span></div>
  <div class="app a3"><svg viewBox="0 0 48 48"><path d="M0 6h7v36h36v6H0z" fill="#3f8f9d"/><path d="M7 0h41v41H7z" fill="#9c2b1a"/><text x="9" y="34" class="nxi">NX</text></svg><span>NX - Modeling</span></div>
  <div class="tray">
    <svg viewBox="0 0 32 32"><path d="M4 22 16 10l12 12" stroke-width="2.400"/></svg>
    <svg viewBox="0 0 32 32"><path d="M31 18V1L1 5v24l16 1M9 15c2-7 10-7 13-2V8M22 13h-5M9 23v-6h5M10 18c2 5 5 6 8 4" stroke-width="2"/><circle cx="24" cy="25" r="7" fill="#ec9633" stroke="none"/></svg>
    <svg viewBox="0 0 32 32"><path d="M10 5h21v20H5M1 4h9v10H1zM5 14v16M18 25v5M11 30h14M4 8h3" stroke-width="2"/></svg>
    <svg viewBox="0 0 32 32"><path d="M1 12h5l6-7v24l-6-7H1zM17 12c3 3 3 7 0 10M22 8c5 5 5 13 0 18M27 4c7 8 7 18 0 26" stroke-width="2"/></svg>
    <div class="clock"><span>7:09 PM</span><span>3/4/2022</span></div>
    <i></i>
  </div>
</footer>
</body>
</html>
```
FILE: styles.css
```css
* { box-sizing: border-box; }
body { margin: 0; width: 2880px; height: 1800px; overflow: hidden; background: #fff; color: #222; font-family: "Noto Sans", "Open Sans", sans-serif; display: flex; flex-direction: column; font-size: 22px; }
svg { display: block; flex: none; }
.defs { position: absolute; width: 0; height: 0; }
i, b, u { font-style: normal; font-weight: 400; text-decoration: none; }
.car { width: 10px; height: 8px; }

/* Title bar and menu */
.top { height: 108px; flex: none; background: linear-gradient(90deg, #255c87, #2a6592 45%, #2f72a4); color: #f2fbff; }
.quick { height: 54px; display: flex; align-items: center; }
.logo { width: 83px; padding-left: 6px; font-weight: 700; font-size: 43px; letter-spacing: 1.500px; line-height: 54px; color: #fff; flex: none; }
.vs { width: 2px; height: 38px; margin-top: -4px; background: #1e4c70; flex: none; }
.ml4 { margin-left: 4px; } .ml6 { margin-left: 6px; } .ml10 { margin-left: 10px; }
.q { display: flex; justify-content: center; flex: none; }
.q.sv { padding-left: 4px; }
.q svg { width: 32px; height: 32px; margin-top: -2px; }
.q svg.car { width: 10px; height: 8px; }
.w20 { width: 20px; } .w24 { width: 24px; } .w46 { width: 46px; } .w50 { width: 50px; } .w52 { width: 52px; } .w54 { width: 54px; } .w56 { width: 56px; } .w62 { width: 62px; }
.ln { fill: none; stroke: #fff; stroke-width: 2; }
.dim { fill: none; stroke: #4287b3; stroke-width: 1.800; }
.dimf { fill: #4287b3; } .wf { fill: #fff; }
.wtxt { width: 99px; padding-left: 1px; font-size: 23px; line-height: 50px; margin-top: -3px; }
.over { width: 14px; height: 14px; margin-left: 14px; }
.title { margin-left: 757px; width: 900px; font-size: 23.800px; line-height: 50px; margin-top: -3px; }
.siemens { width: 177px; font-weight: 700; font-size: 26px; letter-spacing: 1.400px; color: #fff; margin-top: 2px; }
.min { width: 16px; height: 4px; margin-top: 18px; }
.rest { width: 24px; height: 24px; margin-left: 28px; }
.cls { width: 22px; height: 22px; margin: -4px 0 0 24px; }
.menu { height: 54px; display: flex; font-size: 25px; align-items: flex-start; }
.menu a { padding: 0 31.250px; line-height: 53px; height: 50px; }
.menu .file { padding-left: 39px; padding-right: 49px; }
.menu .on { color: #ecd37c; border-bottom: 4px solid #ecca62; }
.find { margin-left: auto; margin-top: 6px; width: 236px; height: 40px; border: 2px solid #6b6b6b; background: #fff; color: #a6a6a6; display: flex; align-items: center; justify-content: space-between; padding: 0 4px 0 4px; font-size: 22px; white-space: nowrap; line-height: 36px; }
.find svg { width: 32px; height: 32px; }
.mi { width: 32px; height: 32px; fill: none; stroke: #f2fbff; stroke-width: 2; margin: 9px 0 0 20px; }
.mi.ex { margin-right: 12px; margin-left: 20px; }

/* Ribbon */
.ribbon { height: 178px; flex: none; display: flex; border-bottom: 2px solid #dcdcdc; background: #fff; position: relative; }
.grp { position: relative; display: flex; flex-direction: column; }
.grp::after { content: ""; position: absolute; right: 0; top: 10px; width: 2px; height: 158px; background: #dcdcdc; }
.g1 { width: 208px; padding-left: 17px; }
.g2 { width: 1070px; padding-left: 14px; }
.g3 { width: 494px; padding-left: 12px; }
.tools { display: flex; height: 144px; padding-top: 13px; }
.tool { display: flex; flex-direction: column; align-items: center; flex: none; line-height: 26px; text-align: center; white-space: nowrap; }
.tool > svg { width: 64px; height: 64px; }
.tool > span { margin-top: 9px; padding-left: 1px; }
.mc { display: inline-block; width: 10px; height: 8px; margin: 0 0 4px 6px; }
.w72 { width: 72px; } .w76 { width: 76px; } .w80 { width: 80px; } .w86 { width: 86px; } .w88 { width: 88px; } .w90 { width: 90px; } .w92 { width: 92px; } .w94 { width: 94px; } .w96 { width: 96px; } .w104 { width: 104px; }
.smalls { margin-left: 18px; white-space: nowrap; letter-spacing: -.15px; }
.smalls.s2 { margin-left: 10px; }
.smalls div { display: flex; align-items: center; height: 54px; gap: 8px; margin-bottom: 14px; line-height: 28px; }
.smalls svg { width: 48px; height: 48px; }
.foot { display: flex; align-items: center; color: #255d86; line-height: 36px; height: 36px; position: relative; }
.foot svg { width: 10px; height: 8px; fill: #1c1c1c; position: absolute; right: 18px; top: 10px; }
.foot span { margin-left: 5px; letter-spacing: .1px; }
.g2 .foot span { margin-left: 480px; }
.g3 .foot span { margin-left: 101px; }
.rbc { width: 10px; height: 8px; margin: 154px 12px 0 auto; fill: #1c1c1c; }

/* Main area */
.main { flex: none; height: 1391px; display: flex; border-bottom: 2px solid #a9a9a9; }
.rail { width: 64px; background: #dcdcdb; border-right: 2px solid #a9a9a9; flex: none; }
.r1 { width: 28px; height: 28px; margin: 12px 0 0 16px; }
.r2 { width: 36px; height: 46px; margin: 62px 0 0 17px; }
.cur { margin: 16px -2px 0 4px; height: 92px; background: #fff; border: 2px solid #a9a9a9; border-right: 0; padding: 21px 0 0 6px; }
.cur svg { width: 48px; height: 46px; }
.r4 { width: 48px; height: 50px; margin: 13px 0 0 12px; }
.r5 { width: 48px; height: 50px; margin: 34px 0 0 12px; }
.r6 { width: 48px; height: 48px; margin: 59px 0 0 12px; }
.r7 { width: 48px; height: 48px; margin: 59px 0 0 11px; }
.r8 { width: 48px; height: 48px; margin: 38px 0 0 12px; }
.panel { width: 614px; flex: none; border-right: 2px solid #a9a9a9; padding: 0 18px 0 12px; }
.ph { height: 56px; padding: 3px 14px 0 7px; display: flex; justify-content: space-between; align-items: center; font-size: 23px; letter-spacing: -.3px; }
.ph i { width: 24px; height: 24px; border: 2px solid #111; border-top-width: 4px; margin-top: 2px; }
.tree { border: 2px solid #dcdcdc; padding: 2px; height: 1120px; font-size: 23px; }
.th { height: 38px; background: #f0f0ef; border-bottom: 2px solid #d0d0d0; display: flex; line-height: 40px; overflow: hidden; }
.th span { border-right: 2px solid #d0d0d0; flex: none; }
.th .n { width: 401px; padding-left: 12px; display: flex; align-items: center; }
.th .n svg { width: 18px; height: 10px; margin-left: 33px; }
.th .c { width: 48px; padding-left: 12px; }
.th .m { width: 90px; padding-left: 11px; border: 0; }
.tb { display: flex; height: 1040px; justify-content: space-between; }
.rows { width: 540px; position: relative; }
.rows::before { content: ""; position: absolute; left: 56px; top: 0; height: 1022px; border-left: 2px dotted #9a9a9a; z-index: 1; }
.row { height: 40px; border-bottom: 2px solid #e9e9e9; display: flex; align-items: center; line-height: 40px; }
.row:nth-child(even) { background: #fafafa; }
.tw { width: 16px; margin-left: 58px; border-top: 2px dotted #9a9a9a; margin-top: 6px; }
.e { width: 32px; height: 32px; margin: 2px 0 0 1px; }
.f { width: 32px; height: 32px; margin: 2px 0 0 1px; }
.row b { width: 261px; height: 38px; padding-left: 6px; border-right: 2px solid #e9e9e9; white-space: nowrap; letter-spacing: -.32px; }
.row.sk b { letter-spacing: -.12px; }
.row.last b { font-weight: 700; letter-spacing: .1px; }
.row u { width: 48px; height: 38px; border-right: 2px solid #e9e9e9; display: flex; align-items: center; justify-content: center; }
.row u svg { width: 32px; height: 28px; margin-top: 2px; }
.vsb { width: 33px; background: #f0f0f0; display: flex; flex-direction: column; padding: 12px 0 9px 0; }
.vsb svg { width: 16px; height: 12px; margin: 0 8px; }
.vsb i { width: 30px; height: 632px; background: #cdcdcb; margin: 350px 0 12px 1px; }
.vsb path, .hsb path { fill: none; stroke: #505050; stroke-width: 3.500; }
.hsb { height: 32px; background: #f0f0f0; display: flex; align-items: center; padding-top: 2px; }
.hsb svg { width: 12px; height: 16px; margin-left: 10px; }
.hsb i { width: 366px; height: 30px; background: #cdcdcb; margin: 0 108px 0 12px; }
.split { height: 10px; margin-bottom: 0; background: #dcdcdc; border: 2px solid #a9a9a9; }
.sec { height: 48px; border-bottom: 4px solid #d2d2d0; display: flex; align-items: center; padding: 2px 0 0 20px; font-size: 25.500px; color: #255d86; line-height: 42px; }
.sec svg { width: 9px; height: 18px; margin-right: 19px; }
.work { width: 2133px; display: flex; flex-direction: column; border-right: 2px solid #dcdcdc; flex: none; }
.tabs { height: 50px; flex: none; border-bottom: 4px solid #20527a; display: flex; }
.tab { width: 274px; display: flex; align-items: center; padding-left: 12px; font-size: 23px; white-space: nowrap; letter-spacing: -.12px; }
.ti { width: 32px; height: 32px; margin-right: 7px; }
.act { width: 380px; background: #20527a; color: #fff; letter-spacing: -.3px; }
.act .ti { margin-right: 8px; }
.lock { width: 20px; height: 22px; margin-left: 14px; }
.x { width: 17px; height: 17px; margin-left: 11px; }
.vp { height: 1339px; border-bottom: 2px solid #dcdcdc; }
.scene { width: 2131px; height: 1338px; }
.cone { width: 300px; height: 700px; background: conic-gradient(from 0deg at 150px 57px, #6c7675 0deg 167deg, #7b8584 170deg, #929c9b 173deg, #a5afae 177deg, #a9b4b4 180deg, #b3bebf 184deg, #aab5b5 188deg, #929d9c 194deg 360deg); -webkit-mask-image: linear-gradient(#000 45%, transparent 90%); mask-image: linear-gradient(#000 45%, transparent 90%); }
.ax { font-family: "Liberation Sans", sans-serif; font-size: 23px; }
.rbar { flex: 1; padding: 28px 8px 0 7px; display: flex; flex-direction: column; }
.rbar svg { width: 46px; height: 46px; margin-left: 4px; }
.rbar i { height: 2px; background: #dcdcdc; margin-top: 18px; }
.rbar svg.bk { width: 8px; height: 10px; margin: auto 0 11px 8px; }
.status { height: 43px; flex: none; }

/* Taskbar */
.task { height: 80px; background: #0f0f0d; display: flex; align-items: center; color: #fff; font-size: 22.700px; }
.t1 { width: 32px; height: 32px; margin-left: 32px; }
.t2 { width: 32px; height: 32px; margin-left: 64px; }
.t3 { width: 32px; height: 32px; margin-left: 64px; }
.t4 { width: 48px; height: 48px; margin-left: 62px; }
.app { height: 80px; border-bottom: 4px solid #7bb1ea; display: flex; align-items: center; padding-top: 4px; white-space: nowrap; flex: none; }
.app span { margin-top: -3px; }
.a1 { width: 304px; margin-left: 34px; padding-left: 17px; }
.a1 svg { width: 36px; height: 46px; margin-right: 15px; }
.a2 { width: 304px; margin-left: 18px; padding-left: 12px; }
.a2 svg, .a3 svg { width: 48px; height: 48px; margin-right: 8px; }
.a3 { width: 320px; margin-left: 10px; padding-left: 20px; background: #323231; font-size: 23.500px; }
.nxi { font-size: 22px; font-weight: 700; fill: #fff; }
.tray { margin-left: auto; display: flex; align-items: center; height: 80px; }
.tray svg { width: 32px; height: 32px; margin-right: 16px; fill: none; stroke: #fff; }
.clock { width: 112px; display: flex; flex-direction: column; text-align: center; line-height: 36px; padding-left: 1px; }
.tray i { width: 2px; height: 80px; background: #777; margin: 0 8px 0 9px; }
```
